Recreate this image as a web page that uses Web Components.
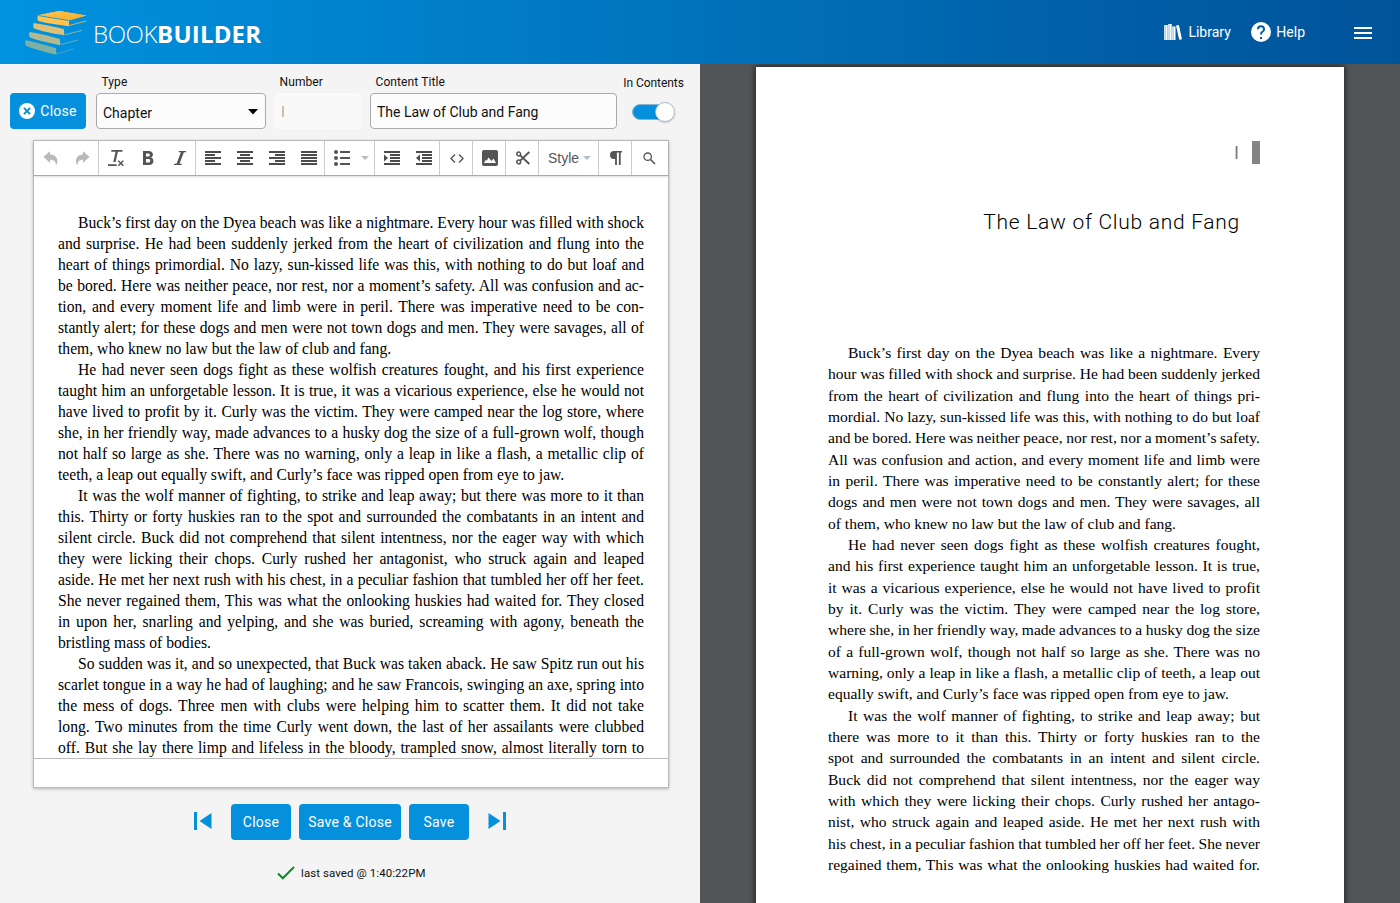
<!DOCTYPE html>
<html lang="en">
<head>
<meta charset="utf-8">
<title>BookBuilder</title>
<style>
html,body{margin:0;height:100%;overflow:hidden}
body{font-family:Roboto,"Liberation Sans",sans-serif;color:#111}
</style>
</head>
<body>
<bb-app></bb-app>
<script>
const ICONS = {
  undo:[16,16,'<path fill="#b9b9b9" d="M0.5 6.8 7 1.2v3.4c4.500.2 7.400 2.600 7.400 6.600 0 1.700-.6 3.200-1.500 4.200.1-3.900-1.800-5.600-5.900-5.700v3.300z"/>'],
  redo:[16,16,'<path fill="#b9b9b9" transform="matrix(-1 0 0 1 16 0)" d="M1.500 6.800 8 1.200v3.400c4.500.2 7 2.600 7 6.600 0 1.700-.6 3.200-1.500 4.200.1-3.900-1.400-5.600-5.500-5.700v3.300z"/>'],
  clear:[16,16,'<path fill="#555" d="M3.300 0h11.200v1.800H9.900L7.600 12H5.300L7.600 1.800H3.300zM0 14.300h8.700V16H0z"/><path stroke="#555" stroke-width="1.500" d="M10.300 10.800l5 5m0-5l-5 5"/>'],
  bold:[12,14,'<path fill="#555" fill-rule="evenodd" d="M1 0h5.600c2.700 0 4.300 1.300 4.300 3.600 0 1.500-.7 2.500-2 3 1.600.4 2.500 1.500 2.500 3.300 0 2.600-1.700 4.100-4.600 4.100H1zM4 2.400v3.200h2.200c1.100 0 1.700-.5 1.700-1.600 0-1.100-.6-1.600-1.700-1.600zM4 8v3.600h2.500c1.200 0 1.800-.6 1.800-1.800S7.700 8 6.500 8z"/>'],
  italic:[12,14,'<path fill="#555" d="M4.800 0H12v1.300H9.900L5.500 12.700h2.200V14H0v-1.300h2.500L6.900 1.300H4.800z"/>'],
  left:[16,14,'<path fill="#4c4c4c" d="M0 0h16v2H0zM0 3h10v2H0zM0 6h16v2H0zM0 9h10v2H0zM0 12h16v2H0z"/>'],
  center:[16,14,'<path fill="#4c4c4c" d="M0 0h16v2H0zM3 3h10v2H3zM0 6h16v2H0zM3 9h10v2H3zM0 12h16v2H0z"/>'],
  right:[16,14,'<path fill="#4c4c4c" d="M0 0h16v2H0zM6 3h10v2H6zM0 6h16v2H0zM6 9h10v2H6zM0 12h16v2H0z"/>'],
  full:[16,14,'<path fill="#4c4c4c" d="M0 0h16v2H0zM0 3h16v2H0zM0 6h16v2H0zM0 9h16v2H0zM0 12h16v2H0z"/>'],
  list:[16,16,'<g fill="#555"><circle cx="2" cy="2" r="2"/><circle cx="2" cy="8" r="2"/><circle cx="2" cy="14" r="2"/><path d="M6 1h10v2H6zM6 7h10v2H6zM6 13h10v2H6z"/></g>'],
  indent:[16,14,'<path fill="#4c4c4c" d="M0 0h16v2H0zM6 3h10v2H6zM6 6h10v2H6zM6 9h10v2H6zM0 12h16v2H0zM0 3.500v7L4 7z"/>'],
  outdent:[16,14,'<path fill="#4c4c4c" d="M0 0h16v2H0zM6 3h10v2H6zM6 6h10v2H6zM6 9h10v2H6zM0 12h16v2H0zM4 3.500v7L0 7z"/>'],
  code:[14,9,'<path fill="none" stroke="#555" stroke-width="1.400" d="M5 .6 1 4.500l4 3.900M9 .6l4 3.900-4 3.900"/>'],
  image:[16,16,'<path fill="#555" fill-rule="evenodd" d="M2 0h12c1.200 0 2 .8 2 2v12c0 1.200-.8 2-2 2H2c-1.200 0-2-.8-2-2V2C0 .8.800 0 2 0zM2 13h12L11.500 8.500 9.500 11 6.500 7.500 4.700 10.800 3.800 9.800z"/>'],
  cut:[14,14,'<g fill="none" stroke="#555" stroke-width="1.500"><circle cx="2.700" cy="3" r="1.900"/><circle cx="2.700" cy="11" r="1.900"/><path d="M4.200 4.400 13.300 13M4.200 9.600 13.300 1" stroke-width="1.900"/></g>'],
  pilcrow:[12,14,'<path fill="#555" d="M4 0h8v1.600h-1.300V14H8.900V1.600H6.900V14H5.100V8H4a4 4 0 0 1 0-8z"/>'],
  search:[13,13,'<g fill="none" stroke="#555"><circle cx="4.700" cy="4.700" r="3.700" stroke-width="1.300"/><path d="M7.500 7.500 12 12" stroke-width="1.600"/></g>'],
  caret:[8,4,'<path fill="#b5bec3" d="M0 0h8L4 4z"/>'],
  caretBlack:[10,6,'<path d="M0 0h10L5 5.500z"/>'],
  closeRound:[16,16,'<circle cx="8" cy="8" r="8" fill="#fff"/><path d="M4.900 4.900l6.200 6.200m0-6.200l-6.200 6.200" stroke="#0490dd" stroke-width="2"/>'],
  library:[18,16,'<g fill="#fff"><path d="M.2 1h3.500v15H.2zM4.200 0h3.500v16H4.200zM8.200 2.500h3.300v13.500h-3.300zM12 1.500l2.900-.6L18 15.200l-2.800.6z"/></g><path stroke="#8ab8dc" stroke-width=".6" d="M1.500 1v15M5.600 0v16M9.500 2.500v13.500"/>'],
  help:[20,20,'<circle cx="10" cy="10" r="10" fill="#fff"/><path d="M9 15h2v2H9zM10 3.200a4 4 0 0 0-4 4h2a2 2 0 1 1 4 0c0 2-3 1.800-3 5.300h2c0-2.300 3-2.600 3-5.300a4 4 0 0 0-4-4z" fill="#005ba4"/>'],
  menu:[18,12,'<path fill="#fff" d="M0 0h18v2H0zM0 5h18v2H0zM0 10h18v2H0z"/>'],
  prev:[18,18,'<path fill="#0490dd" d="M0 0h3v18H0zM17.500 1v16L5.500 9z"/>'],
  next:[18,18,'<path fill="#0490dd" d="M15 0h3v18h-3zM.5 1v16l12-8z"/>'],
  check:[18,14,'<path fill="none" stroke="#0b8a22" stroke-width="2" d="M1 7.500 5.800 12.300 17 1"/>'],
  logo:[62,46,'<defs><linearGradient id="t" x1="0" x2="1" y2="1"><stop stop-color="#ffc550"/><stop offset="1" stop-color="#f9ab25"/></linearGradient></defs><path fill="#7fb0a4" d="M.5 30.300c6.500 1 22 5.400 30.500 8l.6 6.400C20 42 9 39 1 35.700c-1-1.200-1-3.800-.5-5.400z"/><path fill="#b2b98e" d="M4.500 22c7 .8 21.500 4.500 30.300 6.900l.6 6.300C24 33 13.200 30.500 4.900 27.500c-1-1.200-.9-3.800-.4-5.500z"/><path fill="#dec079" d="M8.600 12.900c7 .8 21.500 4 30.200 6l.6 6.400C28 23.500 16.700 21.500 9 18.500c-1-1.200-.9-3.800-.4-5.600z"/><path fill="#ffc34f" d="M12.900 5.500 34 1l27.500 4.500-17.500 4.700v6C33 14.500 20.500 13 13.200 10.900c-1-1.200-.8-3.800-.3-5.400z"/><path fill="url(#t)" d="M13.500 5 34 1l27.300 4.500-17.500 5z"/><g fill="none" stroke-width="1"><path stroke="#279bd4" d="M14 5.700 43.500 10.500"/><path stroke="#c4b66d" d="M44 15.500 61.200 11"/><path stroke="#91b299" d="M40 24.700 57 20.500"/><path stroke="#68abb6" d="M36 34.500 53 30"/><path stroke="#49a2cb" d="M32 44 48.500 39"/></g>'],
};

class BbIcon extends HTMLElement {
  connectedCallback(){
    const [w,h,body] = ICONS[this.getAttribute('name')];
    this.attachShadow({mode:'open'}).innerHTML =
      `<style>:host{display:block;flex:none;width:${w}px;height:${h}px}svg{display:block}</style><svg width="${w}" height="${h}" viewBox="0 0 ${w} ${h}">${body}</svg>`;
  }
}
customElements.define('bb-icon', BbIcon);

const define = (name, html) => {
  const t = document.createElement('template');
  t.innerHTML = html;
  customElements.define(name, class extends HTMLElement {
    constructor(){ super(); this.attachShadow({mode:'open'}).append(t.content.cloneNode(true)); }
  });
};

define('bb-button', `<style>
:host{display:flex;align-items:center;justify-content:center;box-sizing:border-box;height:36px;border-radius:4px;background:#0490dd;color:#fff;font-size:14px;letter-spacing:.25px;gap:5px;white-space:nowrap}
</style><slot></slot>`);

define('bb-field', `<style>
:host{display:flex;flex-direction:column;gap:3px;box-sizing:border-box}
.label{font-size:12px;letter-spacing:.1px;line-height:16px;padding-left:5.500px;color:#111}
.box{display:flex;align-items:center;justify-content:space-between;box-sizing:border-box;height:36px;border:1px solid #a9a9a9;border-radius:4px;background:#fcfcfc;padding:2px 7px 0 6px;font-size:14px;letter-spacing:0;color:#111}
:host([disabled]) .box{border-color:#f9f9f9;background:#f9f9f9;color:#aaa}
</style><div class="label"><slot name="label"></slot></div><div class="box"><slot></slot></div>`);

define('bb-switch', `<style>
:host{display:flex;flex-direction:column;align-items:center;width:61px;font-size:12px;letter-spacing:-.05px;line-height:16px;white-space:nowrap}
.track{width:40px;height:14px;border:1px solid #8ab5d0;border-radius:8px;background:#0490dd;margin:13px 2px 0 0;display:flex;justify-content:flex-end;align-items:center}
.knob{width:18px;height:18px;flex:none;border:1px solid #a9bfcc;border-radius:50%;background:#fff;margin-right:-2px;box-shadow:0 1px 2px #0003}
</style><slot></slot><div class="track"><div class="knob"></div></div>`);

define('bb-group', `<style>
:host{display:flex;align-items:center;justify-content:space-around;box-sizing:border-box;height:34px;border-right:1px solid #ccc;font:14px/34px "Liberation Sans",sans-serif;color:#555}
:host(:last-child){border:0}
::slotted(*){flex:none}
</style><slot></slot>`);

define('bb-toolbar', `<style>
:host{display:flex;height:34px;border-bottom:1px solid #aaa;box-shadow:0 1px 2px #0002;background:#fff}
.cell{width:32px;display:flex;justify-content:center}
bb-group{padding-left:1px}
</style>
<bb-group style="width:65px;justify-content:flex-start"><div class="cell"><bb-icon name="undo"></bb-icon></div><div class="cell"><bb-icon name="redo"></bb-icon></div></bb-group>
<bb-group style="width:97px;justify-content:flex-start"><div class="cell"><bb-icon name="clear"></bb-icon></div><div class="cell"><bb-icon name="bold"></bb-icon></div><div class="cell"><bb-icon name="italic"></bb-icon></div></bb-group>
<bb-group style="width:129px;justify-content:flex-start"><div class="cell"><bb-icon name="left"></bb-icon></div><div class="cell"><bb-icon name="center"></bb-icon></div><div class="cell"><bb-icon name="right"></bb-icon></div><div class="cell"><bb-icon name="full"></bb-icon></div></bb-group>
<bb-group style="width:50px;justify-content:flex-start;padding-left:9px;gap:11px"><bb-icon name="list"></bb-icon><bb-icon name="caret"></bb-icon></bb-group>
<bb-group style="width:65px;justify-content:flex-start"><div class="cell"><bb-icon name="indent"></bb-icon></div><div class="cell"><bb-icon name="outdent"></bb-icon></div></bb-group>
<bb-group style="width:33px;padding-left:2px"><bb-icon name="code"></bb-icon></bb-group>
<bb-group style="width:33px;padding-left:2px"><bb-icon name="image"></bb-icon></bb-group>
<bb-group style="width:33px;padding-left:2px"><bb-icon name="cut"></bb-icon></bb-group>
<bb-group style="width:60px;justify-content:flex-start;padding-left:9px;gap:4px"><span>Style</span><bb-icon name="caret"></bb-icon></bb-group>
<bb-group style="width:33px;padding-left:2px"><bb-icon name="pilcrow"></bb-icon></bb-group>
<bb-group style="width:36px;justify-content:flex-start;padding-left:11px"><bb-icon name="search"></bb-icon></bb-group>`);

/* Sets one printed line per source line. "> " opens a paragraph, a trailing "|" ends one. */
class BookText extends HTMLElement {
  connectedCallback(){
    const root = this.attachShadow({mode:'open'});
    root.innerHTML = `<style>:host{display:block;color:#000}
    .line{display:block;white-space:pre;height:var(--leading);line-height:var(--leading)}
    .first{padding-left:20px}</style>`;
    const lines = this.textContent.trim().split('\n').map(s => s.trim());
    this.textContent = '';
    for (const src of lines) {
      const first = src.startsWith('> ');
      const text = src.replace(/^> /,'').replace(/\|$/,'');
      const div = document.createElement('div');
      const span = document.createElement('span');
      div.className = first ? 'line first' : 'line';
      span.textContent = text;
      div.append(span);
      root.append(div);
      if (!src.endsWith('|')) {
        const want = this.clientWidth - (first ? 20 : 0);
        span.style.wordSpacing = (want - span.getBoundingClientRect().width) / (text.split(' ').length - 1) + 'px';
      }
    }
  }
}
customElements.define('book-text', BookText);

define('bb-header', `<style>
:host{display:flex;align-items:center;height:64px;box-sizing:border-box;padding:0 28px 0 25px;background:linear-gradient(90deg,#0092e0 0%,#0078c1 42%,#005ba3 85%,#00549a 100%);color:#fff;font-size:14px}
.logo{align-self:flex-start;margin-top:10px}
.word{font:300 24px/30px "Open Sans",sans-serif;margin:3px auto 0 6px;display:flex;white-space:nowrap}
.word span{letter-spacing:-.4px}.word b{font-weight:700;letter-spacing:.2px}
.item{display:flex;align-items:center}
</style>
<bb-icon class="logo" name="logo"></bb-icon>
<div class="word"><span>BOOK</span><b>BUILDER</b></div>
<div class="item" style="gap:6px;margin-right:20.500px"><bb-icon name="library"></bb-icon><span>Library</span></div>
<div class="item" style="gap:5px;margin-right:49px"><bb-icon name="help"></bb-icon><span>Help</span></div>
<bb-icon name="menu" style="margin-top:2px"></bb-icon>`);

define('bb-editor', `<style>
:host{display:flex;flex-direction:column;width:700px;background:#f4f4f4;overflow:hidden}
.form{display:flex;align-items:flex-start;padding:10px 0 0 10px;height:66px}
.frame{margin-left:33px;width:634px;height:646px;border:1px solid #bbb;background:#fff;box-shadow:0 1px 3px #0004;display:flex;flex-direction:column}
.doc{height:583px;box-sizing:border-box;overflow:hidden;padding:36px 24px 0;border-bottom:1px solid #bbb;font:15.650px "Liberation Serif",serif;--leading:21px}
.actions{display:flex;align-items:center;justify-content:center;margin-top:16px;gap:8px;height:36px}
.saved{display:flex;align-items:center;gap:6px;margin:22px 0 0 277px;font-size:11.450px;line-height:20px;letter-spacing:.1px}
.saved span{padding-top:1px}
</style>
<div class="form">
<bb-button style="width:76px;margin:19px 10px 0 0"><bb-icon name="closeRound"></bb-icon>Close</bb-button>
<bb-field style="width:170px;margin-right:8px"><span slot="label">Type</span><span style="padding-top:2px">Chapter</span><bb-icon name="caretBlack"></bb-icon></bb-field>
<bb-field disabled style="width:88px;margin-right:8px"><span slot="label">Number</span><span>I</span></bb-field>
<bb-field style="width:247px;margin-right:6px"><span slot="label">Content Title</span><span>The Law of Club and Fang</span></bb-field>
<bb-switch style="margin-top:1px">In Contents</bb-switch>
</div>
<div class="frame"><bb-toolbar></bb-toolbar><div class="doc"><slot></slot></div></div>
<div class="actions"><bb-icon name="prev" style="margin:-2px 11px 0 0"></bb-icon><bb-button style="width:60px">Close</bb-button><bb-button style="width:102px">Save &amp; Close</bb-button><bb-button style="width:60px">Save</bb-button><bb-icon name="next" style="margin:-2px 0 0 11px"></bb-icon></div>
<div class="saved"><bb-icon name="check"></bb-icon><span>last saved @ 1:40:22PM</span></div>`);

define('bb-preview', `<style>
:host{display:block;flex:1;box-sizing:border-box;padding:3px 56px 0;background:#515558;overflow:hidden}
.page{height:900px;box-sizing:border-box;background:#fff;box-shadow:0 0 6px 1px #0009;padding:74px 84px 0 72px}
.num{display:flex;justify-content:flex-end;align-items:center;gap:13px;height:23px;font:18px "Liberation Sans",sans-serif;color:#777}
.num span{padding-top:1px}
.bar{width:8px;height:23px;background:#848484}
h1{margin:44px 20px 0 0;text-align:right;font:300 21px/28px Roboto,sans-serif;letter-spacing:.720px;color:#000}
.body{margin-top:106px;font:15.550px "Liberation Serif",serif;--leading:21.333px}
</style>
<div class="page"><div class="num"><span>I</span><div class="bar"></div></div><h1>The Law of Club and Fang</h1><div class="body"><slot></slot></div></div>`);

define('bb-app', `<style>
:host{display:flex;flex-direction:column;width:1400px;height:903px;overflow:hidden}
main{display:flex;flex:1;min-height:0}
</style>
<bb-header></bb-header>
<main>
<bb-editor><book-text>
> Buck’s first day on the Dyea beach was like a nightmare. Every hour was filled with shock
and surprise. He had been suddenly jerked from the heart of civilization and flung into the
heart of things primordial. No lazy, sun-kissed life was this, with nothing to do but loaf and
be bored. Here was neither peace, nor rest, nor a moment’s safety. All was confusion and ac-
tion, and every moment life and limb were in peril. There was imperative need to be con-
stantly alert; for these dogs and men were not town dogs and men. They were savages, all of
them, who knew no law but the law of club and fang.|
> He had never seen dogs fight as these wolfish creatures fought, and his first experience
taught him an unforgetable lesson. It is true, it was a vicarious experience, else he would not
have lived to profit by it. Curly was the victim. They were camped near the log store, where
she, in her friendly way, made advances to a husky dog the size of a full-grown wolf, though
not half so large as she. There was no warning, only a leap in like a flash, a metallic clip of
teeth, a leap out equally swift, and Curly’s face was ripped open from eye to jaw.|
> It was the wolf manner of fighting, to strike and leap away; but there was more to it than
this. Thirty or forty huskies ran to the spot and surrounded the combatants in an intent and
silent circle. Buck did not comprehend that silent intentness, nor the eager way with which
they were licking their chops. Curly rushed her antagonist, who struck again and leaped
aside. He met her next rush with his chest, in a peculiar fashion that tumbled her off her feet.
She never regained them, This was what the onlooking huskies had waited for. They closed
in upon her, snarling and yelping, and she was buried, screaming with agony, beneath the
bristling mass of bodies.|
> So sudden was it, and so unexpected, that Buck was taken aback. He saw Spitz run out his
scarlet tongue in a way he had of laughing; and he saw Francois, swinging an axe, spring into
the mess of dogs. Three men with clubs were helping him to scatter them. It did not take
long. Two minutes from the time Curly went down, the last of her assailants were clubbed
off. But she lay there limp and lifeless in the bloody, trampled snow, almost literally torn to
</book-text></bb-editor>
<bb-preview><book-text>
> Buck’s first day on the Dyea beach was like a nightmare. Every
hour was filled with shock and surprise. He had been suddenly jerked
from the heart of civilization and flung into the heart of things pri-
mordial. No lazy, sun-kissed life was this, with nothing to do but loaf
and be bored. Here was neither peace, nor rest, nor a moment’s safety.
All was confusion and action, and every moment life and limb were
in peril. There was imperative need to be constantly alert; for these
dogs and men were not town dogs and men. They were savages, all
of them, who knew no law but the law of club and fang.|
> He had never seen dogs fight as these wolfish creatures fought,
and his first experience taught him an unforgetable lesson. It is true,
it was a vicarious experience, else he would not have lived to profit
by it. Curly was the victim. They were camped near the log store,
where she, in her friendly way, made advances to a husky dog the size
of a full-grown wolf, though not half so large as she. There was no
warning, only a leap in like a flash, a metallic clip of teeth, a leap out
equally swift, and Curly’s face was ripped open from eye to jaw.|
> It was the wolf manner of fighting, to strike and leap away; but
there was more to it than this. Thirty or forty huskies ran to the
spot and surrounded the combatants in an intent and silent circle.
Buck did not comprehend that silent intentness, nor the eager way
with which they were licking their chops. Curly rushed her antago-
nist, who struck again and leaped aside. He met her next rush with
his chest, in a peculiar fashion that tumbled her off her feet. She never
regained them, This was what the onlooking huskies had waited for.
</book-text></bb-preview>
</main>`);
</script>
</body>
</html>
